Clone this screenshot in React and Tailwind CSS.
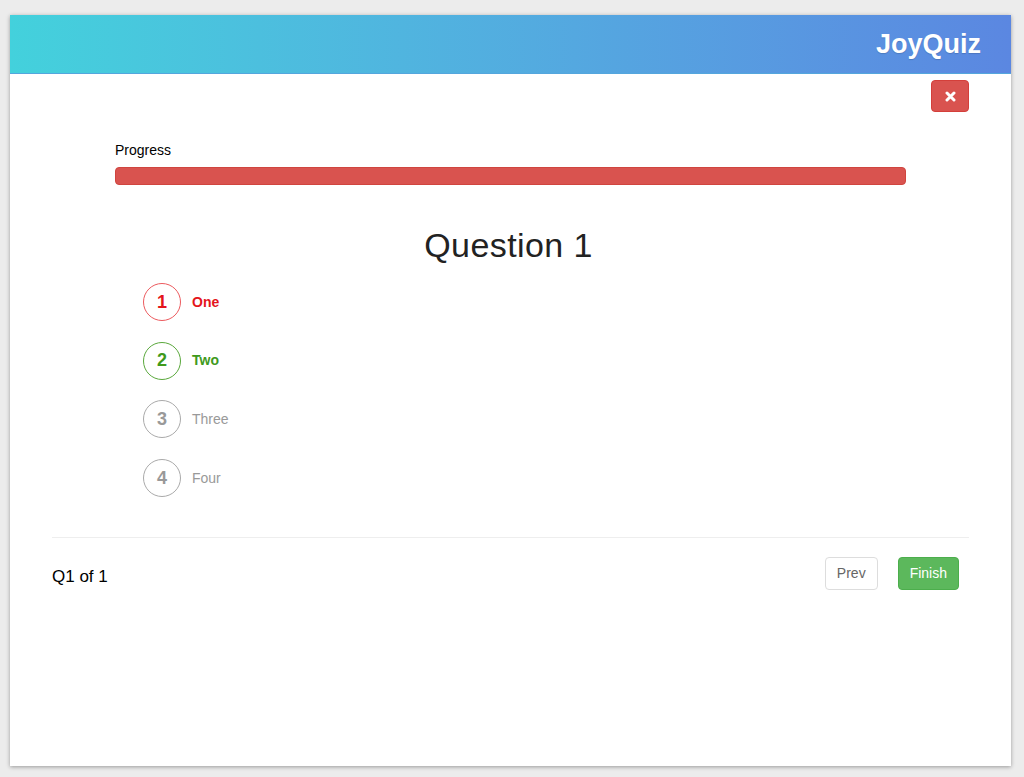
import React from 'react';

const options = [
  { num: 1, label: 'One', state: 'wrong' },
  { num: 2, label: 'Two', state: 'right' },
  { num: 3, label: 'Three', state: 'idle' },
  { num: 4, label: 'Four', state: 'idle' },
];

const styles = {
  wrong: { circle: 'border-[#ec5a5e] text-[#e4151c]', text: 'text-[#e4151c] font-bold' },
  right: { circle: 'border-[#5aa83c] text-[#3f9a1c]', text: 'text-[#3f9a1c] font-bold' },
  idle: { circle: 'border-[#aaaaaa] text-[#999999]', text: 'text-[#999999]' },
};

const App = () => {
  return (
    <div className="min-h-[777px] bg-[#ececec] pt-[15px] pb-[11px] pl-[10px] pr-[13px] font-['Liberation_Sans',Arial,sans-serif]">
      <div className="bg-white h-[751px] shadow-[0_1px_4px_rgba(0,0,0,0.35)] flex flex-col">

        {/* Header */}
        <div className="h-[59px] shrink-0 bg-gradient-to-r from-[#43d1dc] to-[#5b87e1] flex items-center justify-end pr-[30px] border-b border-[#54a6dd]">
          <h1 className="text-white text-[27px] font-bold [text-shadow:0_1px_1px_rgba(0,0,0,0.15)]">JoyQuiz</h1>
        </div>

        <div className="px-[42px]">

          {/* Close */}
          <div className="flex justify-end mt-[6px]">
            <button className="w-[38px] h-[32px] rounded-[4px] bg-[#d9534f] border border-[#d43f3a] flex items-center justify-center">
              <svg width="11" height="11" viewBox="0 0 11 11">
                <path d="M2 2 L9 9 M9 2 L2 9" stroke="white" strokeWidth="3" strokeLinecap="round" />
              </svg>
            </button>
          </div>

          {/* Progress */}
          <div className="mx-[63px] mt-[30px]">
            <p className="text-[14px] text-black leading-[16px]">Progress</p>
            <div className="mt-[9px] h-[18px] rounded-[4px] bg-[#d9534f] border border-[#d0453f]"></div>
          </div>

          {/* Question */}
          <h2 className="text-center text-[34px] text-[#222] leading-[40px] mt-[40px] tracking-[0.4px] pr-[4px]">Question 1</h2>

          <div className="ml-[91px] mt-[18px] flex flex-col gap-[20.7px]">
            {options.map((o) => (
              <div key={o.num} className="flex items-center gap-[11px]">
                <div className={`w-[38px] h-[38px] rounded-full border flex items-center justify-center text-[18px] font-bold ${styles[o.state].circle}`}>
                  {o.num}
                </div>
                <span className={`text-[14px] ${styles[o.state].text}`}>{o.label}</span>
              </div>
            ))}
          </div>

          {/* Footer */}
          <div className="mt-[40px] border-t border-[#eeeeee] pt-[19px] flex items-center justify-between">
            <p className="text-[17px] text-black mt-[6px]">Q1 of 1</p>
            <div className="flex items-center gap-[20px] mr-[10px]">
              <button className="h-[33px] px-[11px] rounded-[4px] border border-[#dddddd] bg-white text-[14px] text-[#666]">Prev</button>
              <button className="h-[33px] px-[11px] rounded-[4px] border border-[#4cae4c] bg-[#5cb85c] text-[14px] text-white">Finish</button>
            </div>
          </div>
        </div>
      </div>
    </div>
  );
};

export default App;
